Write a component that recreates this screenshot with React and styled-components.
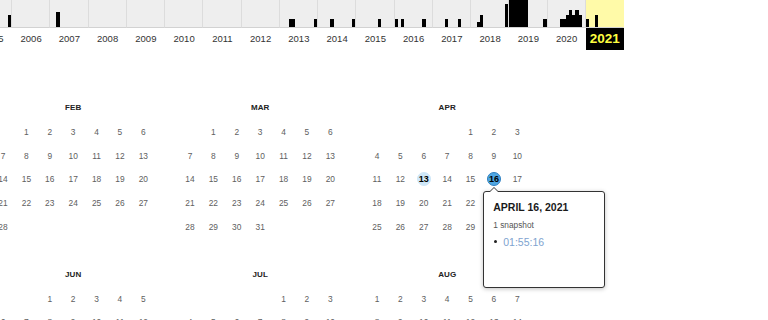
import React from "react";
import styled, { createGlobalStyle } from "styled-components";

const GlobalStyle = createGlobalStyle`
  html, body {
    margin: 0;
    padding: 0;
    background: #fff;
    overflow: hidden;
  }
  body {
    font-family: "Liberation Sans", Helvetica, Arial, sans-serif;
    color: #333;
  }
`;

const YEAR_W = 38.25;
const DAY_W = 23.4;
const ROW_H = 23.8;

// bar heights per month (px of 27)
const captures = {
  2005: { 11: 12 },
  2007: { 2: 15 },
  2013: { 3: 8, 4: 8, 11: 8 },
  2014: { 4: 8, 11: 8 },
  2015: { 7: 8 },
  2016: { 0: 8, 2: 8, 9: 8 },
  2017: { 4: 8, 8: 8 },
  2018: { 2: 5, 3: 12, 11: 23 },
  2019: { 0: 27, 1: 27, 2: 27, 3: 27, 4: 27, 5: 27, 11: 8 },
  2020: { 4: 8, 5: 8, 6: 12, 7: 17, 8: 12, 9: 17, 10: 12 },
  2021: { 0: 8, 3: 12 },
};

const years = [];
for (let y = 2005; y <= 2021; y++) years.push(y);

const Sparkline = styled.div`
  margin-left: -26.25px;
`;

const Bars = styled.div`
  display: flex;
`;

const YearCol = styled.div`
  box-sizing: border-box;
  width: ${YEAR_W}px;
  height: 28px;
  background: ${(p) => (p.$current ? "#fffaa8" : "#eeeeee")};
  border-right: 1px solid ${(p) => (p.$current ? "#fffaa8" : "#dcdcdc")};
  border-bottom: 1px solid #d2d2d2;
  display: grid;
  grid-template-columns: repeat(12, 1fr);
  align-items: end;
`;

const Bar = styled.div`
  height: ${(p) => p.$h}px;
  background: #000;
`;

const Labels = styled.div`
  display: flex;
`;

const YearLabel = styled.div`
  width: ${YEAR_W}px;
  height: 22px;
  line-height: 22px;
  text-align: center;
  font-size: ${(p) => (p.$current ? "13.5px" : "9.5px")};
  font-weight: ${(p) => (p.$current ? 700 : 400)};
  color: ${(p) => (p.$current ? "#ffff40" : "#333")};
  background: ${(p) => (p.$current ? "#000" : "transparent")};
`;

const Calendar = styled.div`
  margin-top: 46px;
  margin-left: -195.7px;
  display: grid;
  grid-template-columns: repeat(4, ${DAY_W * 7}px);
  column-gap: 23.2px;
`;

const Month = styled.div`
  display: flex;
  flex-direction: column;
`;

const MonthTitle = styled.div`
  height: 24px;
  line-height: 24px;
  text-align: center;
  font-size: 8px;
  font-weight: 700;
  color: #222;
  letter-spacing: 0.1px;
`;

const Days = styled.div`
  display: grid;
  grid-template-columns: repeat(7, ${DAY_W}px);
  grid-template-rows: repeat(6, ${ROW_H}px);
`;

const DayCell = styled.div`
  position: relative;
  display: flex;
  align-items: center;
  justify-content: center;
  font-size: 8.4px;
  color: #606060;
`;

const Dot = styled.span`
  box-sizing: border-box;
  width: 14px;
  height: 14px;
  border-radius: 50%;
  display: flex;
  align-items: center;
  justify-content: center;
  font-weight: 700;
  font-size: 9px;
  color: #000;
  background: ${(p) => (p.$active ? "#4fa6e2" : "#cfe7f8")};
  border: 1px solid ${(p) => (p.$active ? "#2d7fc1" : "#cfe7f8")};
`;

const Tooltip = styled.div`
  position: absolute;
  left: 1px;
  top: 23px;
  z-index: 5;
  box-sizing: border-box;
  width: 122px;
  height: 97px;
  padding: 9px 9px 0;
  background: #fff;
  border: 1px solid #333;
  border-radius: 3px;
  box-shadow: 0 1px 4px rgba(0, 0, 0, 0.25);
  text-align: left;

  &::before,
  &::after {
    content: "";
    position: absolute;
    width: 0;
    height: 0;
    border-style: solid;
    border-color: transparent;
  }
  &::before {
    left: 5px;
    top: -5px;
    border-width: 0 5px 5px 5px;
    border-bottom-color: #333;
  }
  &::after {
    left: 6px;
    top: -4px;
    border-width: 0 4px 4px 4px;
    border-bottom-color: #fff;
  }
`;

const TipTitle = styled.div`
  font-size: 10.5px;
  line-height: 13px;
  font-weight: 700;
  color: #1a1a1a;
`;

const TipCount = styled.div`
  margin-top: 5px;
  font-size: 8.3px;
  line-height: 12px;
  color: #555;
`;

const TipItem = styled.div`
  margin-top: 4px;
  display: flex;
  align-items: center;
  gap: 6px;
  padding-left: 1px;
  line-height: 14px;
`;

const Bullet = styled.span`
  width: 3px;
  height: 3px;
  border-radius: 50%;
  background: #222;
`;

const TimeLink = styled.a`
  font-size: 10.5px;
  color: #7ea3cf;
  text-decoration: none;
`;

const monthNames = ["JAN", "FEB", "MAR", "APR", "MAY", "JUN", "JUL", "AUG", "SEP", "OCT", "NOV", "DEC"];
const snapshots = { "3-13": "light", "3-16": "active" };

function MonthView({ index }) {
  const first = new Date(2021, index, 1).getDay();
  const count = new Date(2021, index + 1, 0).getDate();
  const cells = [];
  for (let i = 0; i < first; i++) cells.push(<DayCell key={"e" + i} />);
  for (let d = 1; d <= count; d++) {
    const snap = snapshots[`${index}-${d}`];
    cells.push(
      <DayCell key={d}>
        {snap ? <Dot $active={snap === "active"}>{d}</Dot> : d}
        {snap === "active" && (
          <Tooltip>
            <TipTitle>APRIL 16, 2021</TipTitle>
            <TipCount>1 snapshot</TipCount>
            <TipItem>
              <Bullet />
              <TimeLink href="#">01:55:16</TimeLink>
            </TipItem>
          </Tooltip>
        )}
      </DayCell>
    );
  }
  return (
    <Month>
      <MonthTitle>{monthNames[index]}</MonthTitle>
      <Days>{cells}</Days>
    </Month>
  );
}

export default function App() {
  return (
    <>
      <GlobalStyle />
      <Sparkline>
        <Bars>
          {years.map((y) => (
            <YearCol key={y} $current={y === 2021}>
              {Array.from({ length: 12 }, (_, m) => (
                <Bar key={m} $h={(captures[y] && captures[y][m]) || 0} />
              ))}
            </YearCol>
          ))}
        </Bars>
        <Labels>
          {years.map((y) => (
            <YearLabel key={y} $current={y === 2021}>
              {y}
            </YearLabel>
          ))}
        </Labels>
      </Sparkline>
      <Calendar>
        {monthNames.map((_, i) => (
          <MonthView key={i} index={i} />
        ))}
      </Calendar>
    </>
  );
}
